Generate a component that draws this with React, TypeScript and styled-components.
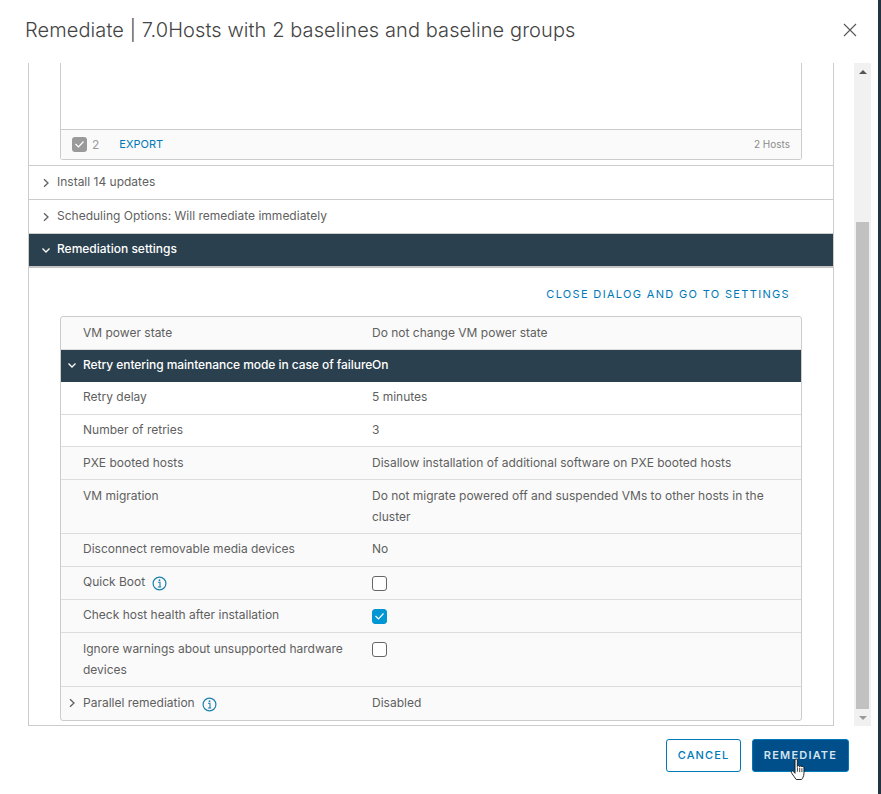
import { ReactNode } from "react";
import styled, { createGlobalStyle } from "styled-components";

const GlobalStyle = createGlobalStyle`
  html, body {
    margin: 0;
    padding: 0;
    background: #22343f;
  }
  body {
    font-family: Inter, "Liberation Sans", sans-serif;
    color: #5f5f5f;
  }
`;

const Chevron = ({ open, color }: { open?: boolean; color: string }) => (
  <svg width="10" height="10" viewBox="0 0 10 10" fill="none" stroke={color} strokeWidth="1.3">
    {open ? <path d="M1.5 3.5 5 7l3.5-3.5" /> : <path d="M3 1.2 7 5 3 8.8" />}
  </svg>
);

const InfoIcon = () => (
  <svg width="15" height="15" viewBox="0 0 15 15" fill="none" stroke="#1b80ad">
    <circle cx="7.5" cy="7.5" r="6.4" strokeWidth="1.2" />
    <path d="M6 6.3h2v4.5M5.9 11h3.2" strokeWidth="1.1" />
    <circle cx="7.5" cy="4.2" r="0.9" fill="#1b80ad" stroke="none" />
  </svg>
);

const Check = ({ color }: { color: string }) => (
  <svg width="11" height="9" viewBox="0 0 11 9" fill="none" stroke={color} strokeWidth="1.2">
    <path d="M1.5 4 4.5 7 9.5 1.5" />
  </svg>
);

const HandCursor = () => (
  <svg width="18" height="23" viewBox="0 0 20 26">
    <path
      d="M5.5 2.2c0-1.6 2.6-1.6 2.6 0v7.4c.3-1.4 2.5-1.3 2.6.2.3-1.3 2.4-1.1 2.5.4.4-1.1 2.3-.8 2.4.7v6.5c0 3.2-1.8 5.8-2.6 6.9H6.8c-1.4-2.2-3.6-4.7-5.3-7.6-.9-1.6.8-2.8 2-1.6l2 2.2z"
      fill="#fff"
      stroke="#111"
      strokeWidth="1"
      strokeLinejoin="round"
    />
    <path d="M8.2 10.5v5M10.8 11v5M13.3 11.5v4.5" stroke="#111" strokeWidth="0.9" fill="none" />
  </svg>
);

const Dialog = styled.div`
  width: 878px;
  height: 794px;
  background: #fff;
  display: flex;
  flex-direction: column;
`;

const Header = styled.header`
  height: 63px;
  flex: none;
  display: flex;
  align-items: center;
  justify-content: space-between;
  padding: 0 21px 3px 25px;
  box-sizing: border-box;
`;

const Title = styled.h1`
  margin: 0;
  font-size: 20px;
  font-weight: 300;
  color: #444;
  letter-spacing: 0.09px;
`;

const CloseButton = styled.button`
  border: none;
  background: none;
  padding: 0;
  width: 14px;
  height: 14px;
  display: flex;
`;

const Body = styled.div`
  flex: none;
  height: 663px;
  display: flex;
  gap: 20px;
  padding-left: 28px;
`;

const ScrollPane = styled.div`
  width: 806px;
  box-sizing: border-box;
  border-left: 1px solid #ccc;
  border-right: 1px solid #ccc;
  border-bottom: 1px solid #ccc;
  display: flex;
  flex-direction: column;
`;

const TopSection = styled.div`
  height: 103px;
  flex: none;
  box-sizing: border-box;
  border-bottom: 1px solid #ccc;
  padding: 0 31px 5px;
  display: flex;
`;

const HostGrid = styled.div`
  flex: 1;
  display: flex;
  flex-direction: column;
  justify-content: flex-end;
  border: 1px solid #ccc;
  border-top: none;
  border-radius: 0 0 3px 3px;
`;

const GridFooter = styled.div`
  height: 30px;
  background: #fafafa;
  border-top: 1px solid #ccc;
  box-sizing: border-box;
  display: flex;
  align-items: center;
  padding: 0 11px 1px;
  font-size: 11px;
  color: #8c8c8c;
`;

const SelectedBox = styled.span`
  width: 15px;
  height: 15px;
  border-radius: 3px;
  background: #9a9a9a;
  display: flex;
  align-items: center;
  justify-content: center;
`;

const SelectedCount = styled.span`
  font-size: 12px;
  margin-left: 5px;
  color: #9a9a9a;
`;

const ExportLink = styled.a`
  margin-left: 20px;
  font-size: 11px;
  font-weight: 400;
  color: #0079b8;
`;

const HostCount = styled.span`
  margin-left: auto;
  font-size: 10px;
`;

const AccordionRow = styled.div<{ $open?: boolean }>`
  height: 34px;
  flex: none;
  box-sizing: border-box;
  display: flex;
  align-items: center;
  padding-bottom: 3px;
  font-size: 12px;
  font-weight: ${(p) => (p.$open ? 500 : 400)};
  color: ${(p) => (p.$open ? "#fff" : "#5f5f5f")};
  background: ${(p) => (p.$open ? "#2a404e" : "#fff")};
  border-bottom: ${(p) => (p.$open ? "2px solid #c4c4c4" : "1px solid #ccc")};
`;

const AccordionSlot = styled.span`
  width: 28px;
  padding: 3px 0 0 12px;
  box-sizing: border-box;
  display: flex;
  flex: none;
`;

const SettingsPanel = styled.div`
  flex: 1;
  padding: 0 31px;
  display: flex;
  flex-direction: column;
`;

const SettingsLink = styled.a`
  height: 48px;
  flex: none;
  align-self: flex-end;
  display: flex;
  align-items: flex-end;
  box-sizing: border-box;
  padding: 0 12px 15px 0;
  font-size: 11px;
  font-weight: 400;
  letter-spacing: 1.33px;
  color: #0079b8;
`;

const SettingsTable = styled.div`
  border: 1px solid #ccc;
  border-radius: 3px;
  background: #fafafa;
`;

const Row = styled.div<{ $h: number; $dark?: boolean; $plain?: boolean; $tight?: boolean }>`
  height: ${(p) => p.$h}px;
  box-sizing: border-box;
  display: flex;
  font-size: 12px;
  line-height: 21px;
  padding-top: ${(p) => (p.$tight ? 4 : 5)}px;
  color: ${(p) => (p.$dark ? "#fff" : "#5f5f5f")};
  background: ${(p) => (p.$dark ? "#2a404e" : p.$plain ? "#fff" : "transparent")};
  font-weight: ${(p) => (p.$dark ? 500 : 400)};
  letter-spacing: ${(p) => (p.$dark ? "-0.06px" : "0")};
  border-bottom: ${(p) => (p.$dark ? "none" : "1px solid #ddd")};
  &:last-child {
    border-bottom: none;
  }
`;

const RowSlot = styled.span`
  width: 22px;
  height: 21px;
  padding-left: 6px;
  box-sizing: border-box;
  display: flex;
  align-items: center;
  flex: none;
`;

const Label = styled.div<{ $noWrap?: boolean }>`
  width: 289px;
  flex: none;
  padding-right: ${(p) => (p.$noWrap ? "0" : "24px")};
  box-sizing: border-box;
  white-space: ${(p) => (p.$noWrap ? "nowrap" : "normal")};
  display: flex;
  align-items: flex-start;
  gap: 7px;
`;

const Value = styled.div`
  flex: 1;
  padding-right: 30px;
`;

const InfoWrap = styled.span`
  display: flex;
  margin-top: 5px;
`;

const CheckBox = styled.span<{ $checked?: boolean; $drop: number }>`
  width: 15px;
  height: 15px;
  margin-top: ${(p) => p.$drop}px;
  box-sizing: border-box;
  border-radius: 3px;
  display: flex;
  align-items: center;
  justify-content: center;
  border: 1px solid ${(p) => (p.$checked ? "#0095d3" : "#666")};
  background: ${(p) => (p.$checked ? "#0095d3" : "#fff")};
`;

const Scrollbar = styled.div`
  width: 17px;
  background: #f1f1f1;
  display: flex;
  flex-direction: column;
  align-items: center;
`;

const ArrowCell = styled.div`
  height: 17px;
  flex: none;
  display: flex;
  align-items: center;
  justify-content: center;
`;

const ScrollTrack = styled.div`
  flex: 1;
  width: 100%;
  display: flex;
  flex-direction: column;
  justify-content: flex-end;
  align-items: center;
`;

const ScrollThumb = styled.div`
  width: 13px;
  height: 487px;
  background: #c1c1c1;
`;

const ArrowUp = styled.span`
  width: 0;
  height: 0;
  border-left: 4px solid transparent;
  border-right: 4px solid transparent;
  border-bottom: 4px solid #555;
`;

const ArrowDown = styled.span`
  width: 0;
  height: 0;
  border-left: 4px solid transparent;
  border-right: 4px solid transparent;
  border-top: 4px solid #9a9a9a;
`;

const Footer = styled.footer`
  flex: 1;
  display: flex;
  justify-content: flex-end;
  gap: 11px;
  padding: 13px 29px 0 0;
`;

const Button = styled.button<{ $primary?: boolean }>`
  position: relative;
  height: 33px;
  padding: 0 0 2px;
  box-sizing: border-box;
  border-radius: 3px;
  border: 1px solid #0079b8;
  font-family: inherit;
  font-size: 11px;
  font-weight: ${(p) => (p.$primary ? 600 : 500)};
  letter-spacing: ${(p) => (p.$primary ? "1.2px" : "1.1px")};
  width: ${(p) => (p.$primary ? "97px" : "75px")};
  color: ${(p) => (p.$primary ? "#d5e4ef" : "#0079b8")};
  background: ${(p) => (p.$primary ? "#004f8a" : "#fff")};
`;

const CursorWrap = styled.span`
  position: absolute;
  left: 37px;
  top: 18px;
  display: flex;
`;

type Setting = {
  label: ReactNode;
  value: ReactNode;
  h: number;
  plain?: boolean;
  tight?: boolean;
  chevron?: boolean;
};

const settings: Setting[] = [
  { label: "Retry delay", value: "5 minutes", h: 33, plain: true, tight: true },
  { label: "Number of retries", value: "3", h: 32, plain: true, tight: true },
  { label: "PXE booted hosts", value: "Disallow installation of additional software on PXE booted hosts", h: 33 },
  {
    label: "VM migration",
    value: "Do not migrate powered off and suspended VMs to other hosts in the cluster",
    h: 54,
  },
  { label: "Disconnect removable media devices", value: "No", h: 33, tight: true },
  {
    label: (
      <>
        Quick Boot
        <InfoWrap>
          <InfoIcon />
        </InfoWrap>
      </>
    ),
    value: <CheckBox $drop={5} />,
    h: 33,
    tight: true,
  },
  {
    label: "Check host health after installation",
    value: (
      <CheckBox $checked $drop={5}>
        <Check color="#fff" />
      </CheckBox>
    ),
    h: 33,
    tight: true,
  },
  { label: "Ignore warnings about unsupported hardware devices", value: <CheckBox $drop={4} />, h: 54 },
  {
    label: (
      <>
        Parallel remediation
        <InfoWrap>
          <InfoIcon />
        </InfoWrap>
      </>
    ),
    value: "Disabled",
    h: 33,
    chevron: true,
  },
];

export default function App() {
  return (
    <>
      <GlobalStyle />
      <Dialog>
        <Header>
          <Title>Remediate | 7.0Hosts with 2 baselines and baseline groups</Title>
          <CloseButton aria-label="Close">
            <svg width="14" height="14" viewBox="0 0 14 14" stroke="#565656" strokeWidth="1.1">
              <path d="M1 1l12 12M13 1 1 13" />
            </svg>
          </CloseButton>
        </Header>
        <Body>
          <ScrollPane>
            <TopSection>
              <HostGrid>
                <GridFooter>
                  <SelectedBox>
                    <Check color="#fff" />
                  </SelectedBox>
                  <SelectedCount>2</SelectedCount>
                  <ExportLink>EXPORT</ExportLink>
                  <HostCount>2 Hosts</HostCount>
                </GridFooter>
              </HostGrid>
            </TopSection>
            <AccordionRow>
              <AccordionSlot>
                <Chevron color="#5f5f5f" />
              </AccordionSlot>
              Install 14 updates
            </AccordionRow>
            <AccordionRow>
              <AccordionSlot>
                <Chevron color="#5f5f5f" />
              </AccordionSlot>
              Scheduling Options: Will remediate immediately
            </AccordionRow>
            <AccordionRow $open>
              <AccordionSlot>
                <Chevron open color="#fff" />
              </AccordionSlot>
              Remediation settings
            </AccordionRow>
            <SettingsPanel>
              <SettingsLink>CLOSE DIALOG AND GO TO SETTINGS</SettingsLink>
              <SettingsTable>
                <Row $h={33}>
                  <RowSlot />
                  <Label>VM power state</Label>
                  <Value>Do not change VM power state</Value>
                </Row>
                <Row $h={32} $dark $tight>
                  <RowSlot>
                    <Chevron open color="#fff" />
                  </RowSlot>
                  <Label $noWrap>Retry entering maintenance mode in case of failure</Label>
                  <Value>On</Value>
                </Row>
                {settings.map((s, i) => (
                  <Row key={i} $h={s.h} $plain={s.plain} $tight={s.tight}>
                    <RowSlot>{s.chevron && <Chevron color="#5f5f5f" />}</RowSlot>
                    <Label>{s.label}</Label>
                    <Value>{s.value}</Value>
                  </Row>
                ))}
              </SettingsTable>
            </SettingsPanel>
          </ScrollPane>
          <Scrollbar>
            <ArrowCell>
              <ArrowUp />
            </ArrowCell>
            <ScrollTrack>
              <ScrollThumb />
            </ScrollTrack>
            <ArrowCell>
              <ArrowDown />
            </ArrowCell>
          </Scrollbar>
        </Body>
        <Footer>
          <Button>CANCEL</Button>
          <Button $primary>
            REMEDIATE
            <CursorWrap>
              <HandCursor />
            </CursorWrap>
          </Button>
        </Footer>
      </Dialog>
    </>
  );
}
